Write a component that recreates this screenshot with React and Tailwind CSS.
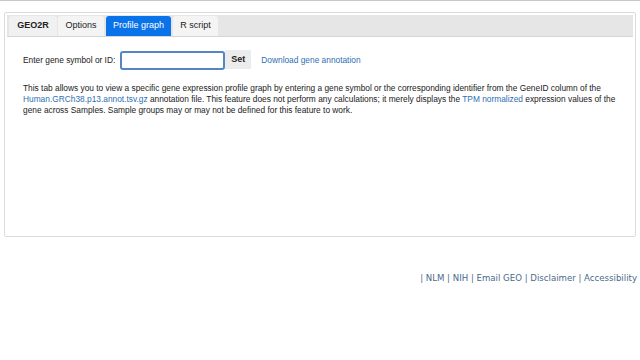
export default function App() {
  const tabs = [
    { name: 'GEO2R', w: 'w-[48px]', ml: 'ml-0' },
    { name: 'Options', w: 'w-[46px]', ml: 'ml-[1px]' },
    { name: 'Profile graph', w: 'w-[65px]', ml: 'ml-[2px]' },
    { name: 'R script', w: 'w-[45px]', ml: 'ml-[2px]' },
  ]
  const active = 'Profile graph'

  return (
    <div className="w-[640px] h-[360px] bg-white overflow-hidden font-['Liberation_Sans',Arial,sans-serif]">
      <div className="h-px bg-[#c8c8c8]"></div>

      <div className="mx-[4px] mt-[11px] h-[225px] border border-[#dcdcdc] rounded-[2px] p-[2px]">
        <div className="flex items-end h-[22px] bg-[#e6e6e6] border-b border-[#d6d6d6] pl-[2px]">
          {tabs.map((t) => (
            <div
              key={t.name}
              className={
                'h-[20px] flex items-center justify-center text-[9px] rounded-t-[3px] ' +
                t.w +
                ' ' +
                t.ml +
                ' ' +
                (t.name === active
                  ? 'bg-[#0a73ea] text-white'
                  : t.name === 'GEO2R'
                  ? 'bg-[#f1f1f1] text-[#222] font-bold'
                  : 'bg-[#f4f4f4] text-[#222]')
              }
            >
              {t.name}
            </div>
          ))}
        </div>

        <div className="px-[16px] pt-[14px] text-[8.35px] leading-[11px] text-[#222]">
          <div className="flex items-center">
            <span>Enter gene symbol or ID:</span>
            <div className="ml-[5px] w-[105px] h-[19px] border-2 border-[#5486c4] rounded-[3px] bg-white"></div>
            <div className="h-[19px] w-[26px] -mt-[2px] flex items-center justify-center bg-[#ececec] text-[9px] font-bold text-[#222]">
              Set
            </div>
            <span className="ml-[10px] text-[#2f6fb3]">Download gene annotation</span>
          </div>

          <p className="mt-[13px] pr-0 -mr-[6px]">
            This tab allows you to view a specific gene expression profile graph by entering a gene symbol or the corresponding identifier from the GeneID column of the{' '}
            <span className="text-[#2f6fb3]">Human.GRCh38.p13.annot.tsv.gz</span> annotation file. This feature does not perform any calculations; it merely displays the{' '}
            <span className="text-[#2f6fb3]">TPM normalized</span> expression values of the gene across Samples. Sample groups may or may not be defined for this feature to work.
          </p>
        </div>
      </div>

      <div className="mt-[35px] pr-[3px] flex justify-end text-[8.6px] text-[#4a6a8c] font-['DejaVu_Sans',Verdana,sans-serif]">
        <span>| NLM | NIH | Email GEO | Disclaimer | Accessibility</span>
      </div>
    </div>
  )
}
